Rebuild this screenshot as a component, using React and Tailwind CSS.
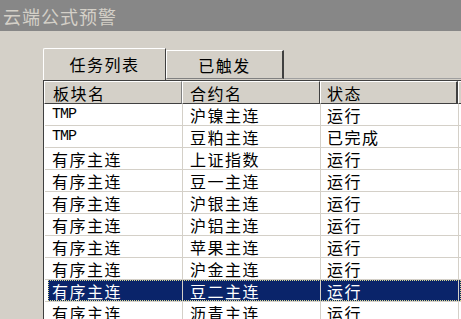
import React from "react";

const rows = [
  ["TMP", "沪镍主连", "运行"],
  ["TMP", "豆粕主连", "已完成"],
  ["有序主连", "上证指数", "运行"],
  ["有序主连", "豆一主连", "运行"],
  ["有序主连", "沪银主连", "运行"],
  ["有序主连", "沪铝主连", "运行"],
  ["有序主连", "苹果主连", "运行"],
  ["有序主连", "沪金主连", "运行"],
  ["有序主连", "豆二主连", "运行"],
  ["有序主连", "沥青主连", "运行"],
];

function Txt({ t }) {
  if (/^[A-Za-z]+$/.test(t)) {
    return <span className="font-['Liberation_Mono',monospace] text-[15px] tracking-[-1px]">{t}</span>;
  }
  return <span className="tracking-[1.5px]">{t}</span>;
}

export default function App() {
  return (
    <div className="w-[461px] h-[319px] overflow-hidden bg-[#d4d0c8] font-['Noto_Sans_CJK_SC','Liberation_Sans',sans-serif] text-black text-[16px] leading-none">
      <div className="h-[31px] bg-[#878787] text-[#d4d0c8] text-[18px] flex items-center pl-[3px] tracking-[1px]">
        云端公式预警
      </div>
      <div className="h-[49px] flex items-end pl-[43px]">
        <div className="w-[123px] h-[32px] border-l border-t border-white rounded-tl-[2px] border-r border-r-[#404040] flex items-center justify-center">
          <span className="tracking-[1.5px] pb-[1px]">任务列表</span>
        </div>
        <div className="w-[118px] h-[29px] mb-[1px] border-l border-t border-white border-r-2 border-r-[#404040] border-b border-b-[#808080] flex items-center justify-center">
          <span className="tracking-[1.5px]">已触发</span>
        </div>
        <div className="flex-1 h-[1px] mb-[1px] bg-[#a0a0a0]" />
      </div>
      <div className="ml-[43px] border-l border-[#404040] bg-white">
        <div className="h-[24px] flex bg-[#d4d0c8] border-t border-[#404040]">
          <div className="w-[138px] h-full flex items-center pl-[8px] border-l border-t border-white border-r border-r-[#808080] border-b border-b-[#404040]"><Txt t="板块名" /></div>
          <div className="w-[138px] h-full flex items-center pl-[7px] border-l border-t border-white border-r border-r-[#404040] border-b border-b-[#404040]"><Txt t="合约名" /></div>
          <div className="w-[138px] h-full flex items-center pl-[6px] border-l border-t border-white border-r-2 border-r-[#404040] border-b border-b-[#404040]"><Txt t="状态" /></div>
          <div className="flex-1 h-full border-l border-t border-white border-b border-b-[#404040]" />
        </div>
        {rows.map((r, i) => {
          const sel = i === 8;
          return (
            <div key={i} className="h-[22px] flex border-b border-[#d4d0c8] pl-[3px] ml-[1px]">
              <div className={`flex flex-1 h-full ${sel ? "bg-[#0a246a] text-white outline-1 outline-dotted outline-[#d8d890] -outline-offset-1" : ""}`}>
                <div className="w-[135px] h-full flex items-center pl-[4px] border-r border-[#d4d0c8]"><Txt t={r[0]} /></div>
                <div className="w-[138px] h-full flex items-center pl-[7px] border-r border-[#d4d0c8]"><Txt t={r[1]} /></div>
                <div className="w-[138px] h-full flex items-center pl-[6px] border-r border-[#d4d0c8]"><Txt t={r[2]} /></div>
                <div className="flex-1 h-full" />
              </div>
            </div>
          );
        })}
      </div>
    </div>
  );
}
